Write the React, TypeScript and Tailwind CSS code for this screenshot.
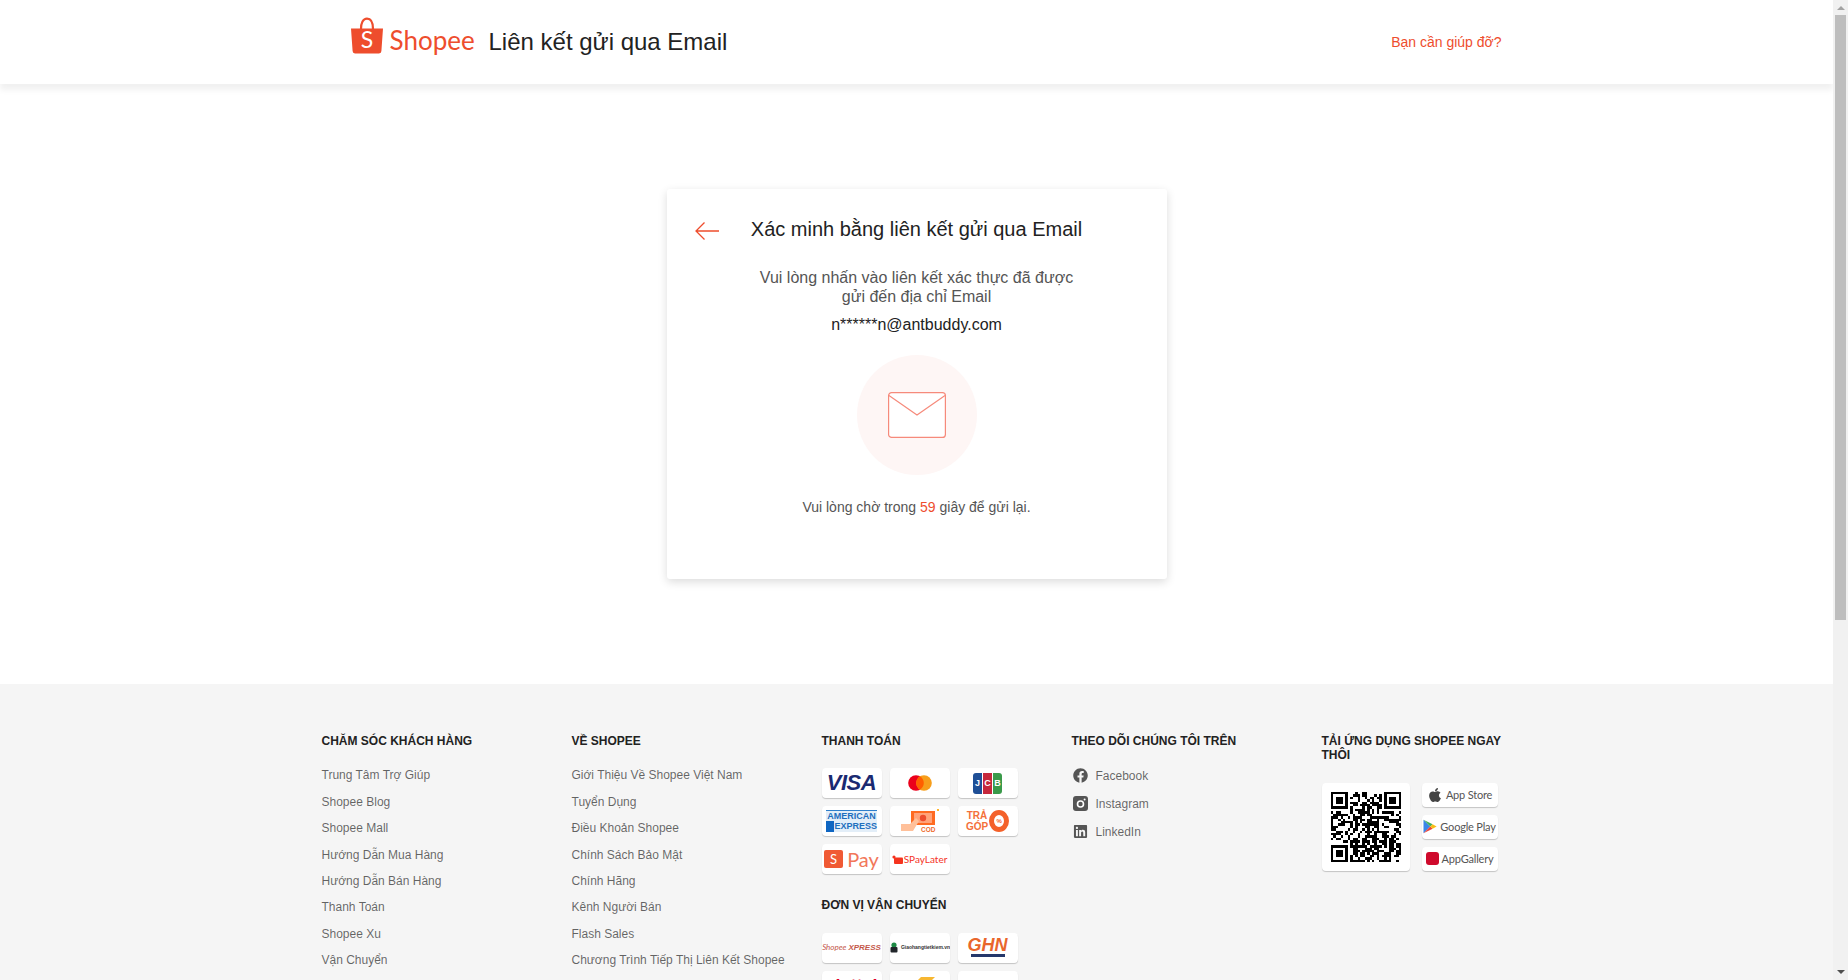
import React from "react";
import { FaApple, FaFacebook, FaLinkedin } from "react-icons/fa";

const careLinks = [
  "Trung Tâm Trợ Giúp",
  "Shopee Blog",
  "Shopee Mall",
  "Hướng Dẫn Mua Hàng",
  "Hướng Dẫn Bán Hàng",
  "Thanh Toán",
  "Shopee Xu",
  "Vận Chuyển",
];

const aboutLinks = [
  "Giới Thiệu Về Shopee Việt Nam",
  "Tuyển Dụng",
  "Điều Khoản Shopee",
  "Chính Sách Bảo Mật",
  "Chính Hãng",
  "Kênh Người Bán",
  "Flash Sales",
  "Chương Trình Tiếp Thị Liên Kết Shopee",
];

const Heading = ({ children, className = "" }: { children: React.ReactNode; className?: string }) => (
  <h3 className={`text-xs font-bold uppercase leading-[14.4px] text-[#222] ${className}`}>{children}</h3>
);

const LinkList = ({ title, links }: { title: string; links: string[] }) => (
  <div className="w-[190px] shrink-0">
    <Heading className="mb-5">{title}</Heading>
    <ul>
      {links.map((link) => (
        <li key={link} className="mb-3 whitespace-nowrap text-xs leading-[14.4px] text-[#00000099]">
          {link}
        </li>
      ))}
    </ul>
  </div>
);

const Tile = ({ children }: { children?: React.ReactNode }) => (
  <div className="flex h-[30px] w-[60px] items-center justify-center overflow-hidden rounded-sm bg-white shadow-[0_1px_1px_rgba(0,0,0,0.2)]">
    {children}
  </div>
);

const ShopeeBag = ({ className }: { className: string }) => (
  <svg viewBox="0 0 32 37" className={className}>
    <path d="M10 12C10 6 12 1.6 16 1.6S22 6 22 12" fill="none" stroke="#ee4d2d" strokeWidth="2.2" />
    <path d="M0 11.5H32L30.4 34a2.4 2.4 0 0 1-2.4 2.4H4A2.4 2.4 0 0 1 1.6 34Z" fill="#ee4d2d" />
    <text x="16" y="31" textAnchor="middle" fontSize="23" fill="#fff" fontFamily="Lato, sans-serif">
      S
    </text>
  </svg>
);

const Mastercard = () => (
  <svg viewBox="0 0 24 16" className="h-4 w-6">
    <circle cx="8" cy="8" r="7.8" fill="#eb001b" />
    <circle cx="16" cy="8" r="7.8" fill="#f79e1b" />
    <path d="M12 1.3a7.8 7.8 0 0 1 0 13.4a7.8 7.8 0 0 1 0-13.4Z" fill="#ff5f00" />
  </svg>
);

const Jcb = () => (
  <div className="flex h-[21px] w-[29px] gap-px">
    <span className="flex-1 rounded-l-[3px] bg-[#1f4f96] pt-[5px] text-center text-[9px] leading-[10px] font-bold text-white">J</span>
    <span className="flex-1 bg-[#c5283d] pt-[5px] text-center text-[9px] leading-[10px] font-bold text-white">C</span>
    <span className="flex-1 rounded-r-[3px] bg-[#3a9a4a] pt-[5px] text-center text-[9px] leading-[10px] font-bold text-white">B</span>
  </div>
);

const Amex = () => (
  <div className="flex h-[22px] w-[51px] flex-col bg-[#2f7fcb]">
    <span className="mt-px h-[10px] bg-[#e3eef8] text-center text-[9px] leading-[10px] font-bold text-[#1e6fbe]">AMERICAN</span>
    <div className="flex flex-1">
      <span className="w-[10px] bg-[#0f66c2]" />
      <span className="flex-1 bg-[#e3eef8] text-center text-[9px] leading-[11px] font-bold text-[#1e6fbe]">EXPRESS</span>
    </div>
  </div>
);

const Cod = () => (
  <svg viewBox="0 0 38 24" className="h-6 w-[38px]">
    <rect x="10" y="2" width="24" height="14" fill="#ff6a21" />
    <rect x="13" y="4" width="18" height="10" fill="#ffa37a" />
    <circle cx="22" cy="9" r="3.2" fill="#ee4d2d" />
    <rect x="36" y="0" width="2" height="2" fill="#ffb52e" />
    <path d="M0 15H9L15 9L18 12L12 22H0Z" fill="#ffc09a" />
    <text x="20" y="23" fontSize="6.5" fontWeight="700" fill="#ee6a2d" fontFamily="Liberation Sans, sans-serif">
      COD
    </text>
  </svg>
);

const TraGop = () => (
  <div className="flex items-center gap-px">
    <span className="text-center text-[10px] leading-[11px] font-bold text-[#f4703a]">
      TRẢ
      <br />
      GÓP
    </span>
    <span className="flex h-[22px] w-5 items-center justify-center rounded-[50%] border-[5px] border-[#f4612a] text-[6px] font-bold text-[#f4612a]">
      %
    </span>
  </div>
);

const SPay = () => (
  <div className="flex items-center gap-1">
    <span className="flex h-[18px] w-[19px] items-center justify-center rounded-[2px] bg-[#f05a34] font-['Lato',sans-serif] text-[13px] leading-none text-white">
      S
    </span>
    <span className="font-['Lato',sans-serif] text-[20px] leading-none text-[#f2775a]">Pay</span>
  </div>
);

const SPayLater = () => (
  <div className="flex items-center gap-px">
    <svg viewBox="0 0 11 9" className="h-[9px] w-[11px]">
      <circle cx="2" cy="2" r="1.6" fill="#f5341f" />
      <rect x="2" y="2.5" width="9" height="6.5" rx="1" fill="#f5341f" />
    </svg>
    <span className="font-['Lato',sans-serif] text-[10px] leading-none text-[#f5341f]">SPayLater</span>
  </div>
);

const Xpress = () => (
  <div className="flex items-baseline text-[#c4574a]">
    <span className="font-['Lato',sans-serif] text-[8px] italic">Shopee</span>
    <span className="ml-0.5 text-[8px] font-bold italic">XPRESS</span>
  </div>
);

const Ghtk = () => (
  <div className="flex items-center gap-[2px]">
    <svg viewBox="0 0 10 11" className="h-[11px] w-[10px]">
      <circle cx="5" cy="3" r="2.6" fill="#1d8a45" />
      <rect x="1.5" y="5" width="7" height="5.5" rx="1" fill="#22262b" />
    </svg>
    <span className="text-[5px] leading-none font-bold whitespace-nowrap text-[#333]">Giaohangtietkiem.vn</span>
  </div>
);

const Ghn = () => (
  <div className="flex flex-col items-center">
    <span className="text-[18px] leading-[15px] font-bold italic text-[#e9662c]">GHN</span>
    <span className="mt-px h-[3px] w-[34px] bg-[#25386b]" />
  </div>
);

const Ghtc = () => (
  <svg viewBox="0 0 30 22" className="h-[22px] w-[30px]">
    <path d="M16 2H30L26 6H12Z" fill="#f7b731" />
    <path d="M10 8H24L20 12H6Z" fill="#f7c95c" />
    <path d="M4 14H18L14 18H0Z" fill="#f7b731" />
  </svg>
);

const GooglePlay = () => (
  <svg viewBox="0 0 14 15" className="h-[15px] w-[14px] shrink-0">
    <path d="M0.5 0.8V14.2L7.2 7.5Z" fill="#3b86e8" />
    <path d="M0.5 0.8L7.2 7.5L9.6 5.2Z" fill="#43b05c" />
    <path d="M0.5 14.2L7.2 7.5L9.6 9.8Z" fill="#e8453c" />
    <path d="M9.6 5.2L13.6 7.5L9.6 9.8L7.2 7.5Z" fill="#f9bc15" />
  </svg>
);

const InstagramIcon = () => (
  <svg viewBox="0 0 15 15" className="ml-px h-[15px] w-[15px] shrink-0">
    <rect width="15" height="15" rx="3" fill="#555" />
    <circle cx="7.5" cy="8" r="3" fill="none" stroke="#fff" strokeWidth="1.6" />
    <circle cx="11.6" cy="3.4" r="1" fill="#fff" />
  </svg>
);

const StoreTile = ({ icon, label }: { icon: React.ReactNode; label: string }) => (
  <div className="flex h-6 w-[76px] items-center justify-center gap-[3px] rounded-sm bg-white shadow-[0_1px_1px_rgba(0,0,0,0.2)]">
    {icon}
    <span className="font-['Lato',sans-serif] text-[11px] leading-none tracking-[-0.2px] whitespace-nowrap text-[#555]">{label}</span>
  </div>
);

// deterministic stand-in for the code's data modules
const QR_SIZE = 29;
const inFinder = (x: number, y: number) =>
  (x < 8 && y < 8) || (x >= QR_SIZE - 8 && y < 8) || (x < 8 && y >= QR_SIZE - 8);

const qrModules = () => {
  const cells: [number, number][] = [];
  let seed = 1337;
  for (let y = 0; y < QR_SIZE; y++) {
    for (let x = 0; x < QR_SIZE; x++) {
      seed = (seed * 1103515245 + 12345) & 0x7fffffff;
      if (!inFinder(x, y) && (seed >> 16) % 100 < 54) cells.push([x, y]);
    }
  }
  return cells;
};

const Finder = ({ x, y }: { x: number; y: number }) => (
  <g>
    <rect x={x} y={y} width="7" height="7" fill="#000" />
    <rect x={x + 1} y={y + 1} width="5" height="5" fill="#fff" />
    <rect x={x + 2} y={y + 2} width="3" height="3" fill="#000" />
  </g>
);

const QrCode = () => (
  <svg viewBox={`0 0 ${QR_SIZE} ${QR_SIZE}`} className="h-[70px] w-[70px]" shapeRendering="crispEdges">
    {qrModules().map(([x, y]) => (
      <rect key={`${x}-${y}`} x={x} y={y} width="1" height="1" fill="#000" />
    ))}
    <Finder x={0} y={0} />
    <Finder x={QR_SIZE - 7} y={0} />
    <Finder x={0} y={QR_SIZE - 7} />
  </svg>
);

const Scrollbar = () => (
  <div className="flex h-full w-[15px] shrink-0 flex-col items-center bg-[#f1f1f1]">
    <div className="flex h-[15px] w-full items-center justify-center">
      <svg viewBox="0 0 8 4" className="h-1 w-2">
        <path d="M4 0L8 4H0Z" fill="#a3a3a3" />
      </svg>
    </div>
    <div className="h-[605px] w-[11px] bg-[#bebebe]" />
    <div className="flex-1" />
    <div className="flex h-[17px] w-full items-center justify-center">
      <svg viewBox="0 0 8 4" className="h-1 w-2">
        <path d="M0 0H8L4 4Z" fill="#505050" />
      </svg>
    </div>
  </div>
);

const SocialRow = ({ icon, label }: { icon: React.ReactNode; label: string }) => (
  <li className="mb-[13.6px] flex h-[14.4px] items-center gap-2">
    {icon}
    {label}
  </li>
);

const App: React.FC = () => {
  return (
    <div className="flex h-screen overflow-hidden bg-white font-['Liberation_Sans',Arial,sans-serif]">
      <div className="min-w-0 flex-1 overflow-hidden">
        {/* Header */}
        <header className="relative z-10 h-[84px] bg-white shadow-[0_6px_6px_rgba(0,0,0,0.06)]">
          <div className="mx-auto flex h-full w-[1200px] items-center justify-between pr-[15px] pl-[34px]">
            <div className="flex items-center">
              <ShopeeBag className="mb-[14px] h-[37px] w-8" />
              <span className="mb-[5px] ml-[7px] w-[84px] font-['Lato',sans-serif] text-[26px] leading-none font-normal text-[#ee4d2d]">
                Shopee
              </span>
              <h1 className="ml-[15px] text-2xl text-[#222]">Liên kết gửi qua Email</h1>
            </div>
            <a className="text-sm text-[#ee4d2d]">Bạn cần giúp đỡ?</a>
          </div>
        </header>

        {/* Verify card */}
        <main className="flex h-[600px] items-center justify-center bg-white">
          <div className="h-[390px] w-[500px] rounded-[3px] bg-white px-7 pt-[26px] shadow-[0_3px_10px_rgba(0,0,0,0.14)]">
            <div className="flex items-center">
              <svg viewBox="0 0 24 18" className="mt-1 h-[18px] w-6 shrink-0" fill="none" stroke="#ee4d2d" strokeWidth="1.3">
                <path d="M24 9H1M9.5 0.5L1 9l8.5 8.5" />
              </svg>
              <h2 className="flex-1 text-center text-xl leading-7 text-[#222]">Xác minh bằng liên kết gửi qua Email</h2>
              <div className="w-6 shrink-0" />
            </div>
            <p className="mx-auto mt-[25px] w-[340px] text-center text-base leading-[19px] text-[#555]">
              Vui lòng nhấn vào liên kết xác thực đã được gửi đến địa chỉ Email
            </p>
            <p className="mt-[9px] text-center text-base leading-[19px] text-[#222]">n******n@antbuddy.com</p>
            <div className="mx-auto mt-[21px] flex h-[120px] w-[120px] items-center justify-center rounded-full bg-[#fef6f5]">
              <svg viewBox="0 0 58 46" className="h-[46px] w-[58px]" fill="#fff" stroke="#f68a7b" strokeWidth="1.2">
                <rect x="0.6" y="0.6" width="56.8" height="44.8" rx="3" />
                <path d="M1 3.5L29 23L57 3.5" fill="none" />
              </svg>
            </div>
            <p className="mt-6 text-center text-sm leading-4 text-[#555]">
              Vui lòng chờ trong <span className="text-[#ee4d2d]">59</span> giây để gửi lại.
            </p>
          </div>
        </main>

        {/* Footer */}
        <footer className="h-[400px] bg-[#f5f5f5] pt-[50px]">
          <div className="mx-auto flex w-[1190px] gap-[60px]">
            <LinkList title="Chăm sóc khách hàng" links={careLinks} />
            <LinkList title="Về Shopee" links={aboutLinks} />

            <div className="w-[190px] shrink-0">
              <Heading className="mb-5">Thanh toán</Heading>
              <div className="grid grid-cols-[60px_60px_60px] gap-2">
                <Tile>
                  <span className="text-[22px] leading-none font-bold tracking-[-0.5px] text-[#1a2a71] italic">VISA</span>
                </Tile>
                <Tile>
                  <Mastercard />
                </Tile>
                <Tile>
                  <Jcb />
                </Tile>
                <Tile>
                  <Amex />
                </Tile>
                <Tile>
                  <Cod />
                </Tile>
                <Tile>
                  <TraGop />
                </Tile>
                <Tile>
                  <SPay />
                </Tile>
                <Tile>
                  <SPayLater />
                </Tile>
              </div>
              <Heading className="mt-6 mb-5">Đơn vị vận chuyển</Heading>
              <div className="grid grid-cols-[60px_60px_60px] gap-2">
                <Tile>
                  <Xpress />
                </Tile>
                <Tile>
                  <Ghtk />
                </Tile>
                <Tile>
                  <Ghn />
                </Tile>
                <Tile>
                  <span className="text-[18px] leading-none font-bold text-[#e3002b]">viettel</span>
                </Tile>
                <Tile>
                  <Ghtc />
                </Tile>
                <Tile />
              </div>
            </div>

            <div className="w-[190px] shrink-0">
              <Heading className="mb-5">Theo dõi chúng tôi trên</Heading>
              <ul className="text-xs text-[#00000099]">
                <SocialRow icon={<FaFacebook className="ml-px h-[15px] w-[15px] text-[#555]" />} label="Facebook" />
                <SocialRow icon={<InstagramIcon />} label="Instagram" />
                <SocialRow icon={<FaLinkedin className="ml-px h-[15px] w-[15px] text-[#555]" />} label="LinkedIn" />
              </ul>
            </div>

            <div className="w-[190px] shrink-0">
              <Heading className="mb-5">Tải ứng dụng Shopee ngay thôi</Heading>
              <div className="flex gap-3">
                <div className="flex h-[88px] w-[88px] items-center justify-center rounded-sm bg-white shadow-[0_1px_1px_rgba(0,0,0,0.2)]">
                  <QrCode />
                </div>
                <div className="flex flex-col gap-2">
                  <StoreTile icon={<FaApple className="h-4 w-4 text-[#444]" />} label="App Store" />
                  <StoreTile icon={<GooglePlay />} label="Google Play" />
                  <StoreTile
                    icon={<span className="h-[13px] w-[13px] shrink-0 rounded-[3px] bg-[#cf0a2c]" />}
                    label="AppGallery"
                  />
                </div>
              </div>
            </div>
          </div>
        </footer>
      </div>
      <Scrollbar />
    </div>
  );
};

export default App;
